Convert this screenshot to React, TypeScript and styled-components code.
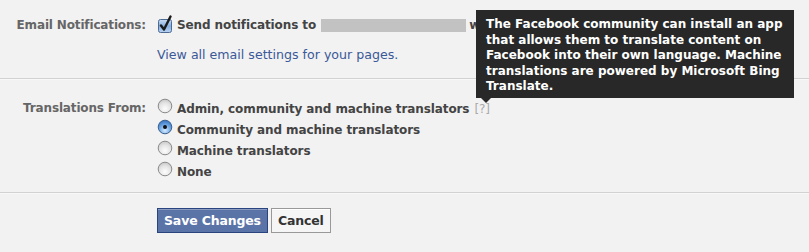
import React from "react";
import styled, { createGlobalStyle } from "styled-components";

const Global = createGlobalStyle`
  html, body { margin: 0; padding: 0; background: #f2f2f2; }
  body { font-family: "DejaVu Sans", Verdana, sans-serif; font-size: 12px; color: #333; }
`;

const Page = styled.div`
  position: relative;
  width: 809px;
  height: 252px;
  overflow: hidden;
  background: #f2f2f2;
`;

const Section = styled.div<{ $pt: number; $pb: number; $line?: boolean }>`
  padding: ${(p) => p.$pt}px 0 ${(p) => p.$pb}px;
  border-bottom: ${(p) => (p.$line ? "1px solid #d2d2d2" : "none")};
  box-shadow: ${(p) => (p.$line ? "0 1px 0 #f8f8f8" : "none")};
`;

const FormRow = styled.div`
  display: grid;
  grid-template-columns: 146px 1fr;
  column-gap: 11px;
  align-items: start;
`;

const Label = styled.div`
  text-align: right;
  font-weight: bold;
  color: #666;
  letter-spacing: -0.15px;
  line-height: 20px;
  white-space: nowrap;
`;

const Field = styled.div`
  display: flex;
  flex-direction: column;
`;

const OptionLine = styled.label<{ $h: number }>`
  display: flex;
  align-items: center;
  height: ${(p) => p.$h}px;
  font-weight: bold;
  color: #444;
  letter-spacing: -0.1px;
  white-space: nowrap;
`;

const Link = styled.a`
  color: #3b5998;
  text-decoration: none;
  font-size: 12.6px;
  line-height: 20px;
  margin-top: 10px;
`;

const Redacted = styled.span`
  display: inline-block;
  width: 145px;
  height: 13px;
  background: #c2c2c2;
  margin: 0 3px 0 5px;
`;

const Help = styled.span`
  color: #aaa;
  font-weight: normal;
  margin-left: 5px;
`;

const Control = styled.span`
  display: inline-flex;
  width: 17px;
  margin-right: 3px;
  align-self: flex-start;
`;

const Buttons = styled.div`
  display: flex;
  gap: 3px;
`;

const Button = styled.button<{ $primary?: boolean }>`
  font-family: inherit;
  font-size: 12.5px;
  font-weight: bold;
  height: 25px;
  padding: 0 6px;
  letter-spacing: -0.15px;
  border: 1px solid ${(p) => (p.$primary ? "#29447e" : "#999")};
  background: ${(p) => (p.$primary ? "#5b74a8" : "#f5f5f5")};
  color: ${(p) => (p.$primary ? "#fff" : "#333")};
  box-shadow: ${(p) => (p.$primary ? "inset 0 1px 0 #8a9cc2" : "inset 0 1px 0 #fff")};
  cursor: pointer;
`;

const Tooltip = styled.div`
  position: absolute;
  left: 476px;
  top: 10px;
  width: 318px;
  height: 88px;
  box-sizing: border-box;
  padding: 7px 10px 0;
  background: #282828;
  color: #fff;
  font-weight: bold;
  font-size: 12px;
  line-height: 15.5px;
  white-space: nowrap;
  &::after {
    content: "";
    position: absolute;
    left: 5px;
    bottom: -5px;
    border-left: 5px solid transparent;
    border-right: 5px solid transparent;
    border-top: 5px solid #282828;
  }
`;

const Checkbox = () => (
  <svg width="17" height="18" viewBox="0 0 17 18">
    <defs>
      <linearGradient id="cbg" x1="0" y1="0" x2="0" y2="1">
        <stop offset="0" stopColor="#c9dcf2" />
        <stop offset="0.5" stopColor="#86aee0" />
        <stop offset="1" stopColor="#b8d3f3" />
      </linearGradient>
    </defs>
    <rect x="1.5" y="4.5" width="13" height="13" rx="2" fill="url(#cbg)" stroke="#4d6a93" />
    <path d="M4 10.5 L7 14.5 L13.5 1.5" fill="none" stroke="#1a1a1a" strokeWidth="2.4" strokeLinecap="round" strokeLinejoin="round" />
  </svg>
);

const Radio = ({ checked }: { checked?: boolean }) => (
  <svg width="16" height="16" viewBox="0 0 16 16">
    <defs>
      <radialGradient id="rOff" cx="0.5" cy="0.7" r="0.7">
        <stop offset="0" stopColor="#fdfdfd" />
        <stop offset="0.6" stopColor="#e4e4e4" />
        <stop offset="1" stopColor="#c6c6c6" />
      </radialGradient>
      <radialGradient id="rOn" cx="0.5" cy="0.75" r="0.7">
        <stop offset="0" stopColor="#d6ebff" />
        <stop offset="0.55" stopColor="#74abe6" />
        <stop offset="1" stopColor="#3b78c4" />
      </radialGradient>
    </defs>
    <circle cx="8" cy="8" r="6.8" fill={checked ? "url(#rOn)" : "url(#rOff)"} stroke={checked ? "#3c5f8c" : "#8a8a8a"} strokeWidth="1" />
    {checked && <circle cx="8" cy="8" r="2" fill="#111" />}
  </svg>
);

const options = [
  { text: "Admin, community and machine translators", help: true },
  { text: "Community and machine translators", checked: true },
  { text: "Machine translators" },
  { text: "None" },
];

const tooltipLines = [
  "The Facebook community can install an app",
  "that allows them to translate content on",
  "Facebook into their own language. Machine",
  "translations are powered by Microsoft Bing",
  "Translate.",
];

export default function App() {
  return (
    <Page>
      <Global />
      <Section $pt={15} $pb={13} $line>
        <FormRow>
          <Label>Email Notifications:</Label>
          <Field>
            <OptionLine $h={20}>
              <Control>
                <Checkbox />
              </Control>
              Send notifications to <Redacted />w
            </OptionLine>
            <Link href="#">View all email settings for your pages.</Link>
          </Field>
        </FormRow>
      </Section>
      <Section $pt={19} $pb={10} $line>
        <FormRow>
          <Label>Translations From:</Label>
          <Field>
            {options.map((o) => (
              <OptionLine key={o.text} $h={21}>
                <Control>
                  <Radio checked={o.checked} />
                </Control>
                {o.text}
                {o.help && <Help>[?]</Help>}
              </OptionLine>
            ))}
          </Field>
        </FormRow>
      </Section>
      <Section $pt={15} $pb={0}>
        <FormRow>
          <div />
          <Buttons>
            <Button $primary>Save Changes</Button>
            <Button>Cancel</Button>
          </Buttons>
        </FormRow>
      </Section>
      <Tooltip>
        {tooltipLines.map((l, i) => (
          <React.Fragment key={i}>
            {l}
            {i < tooltipLines.length - 1 && <br />}
          </React.Fragment>
        ))}
      </Tooltip>
    </Page>
  );
}
